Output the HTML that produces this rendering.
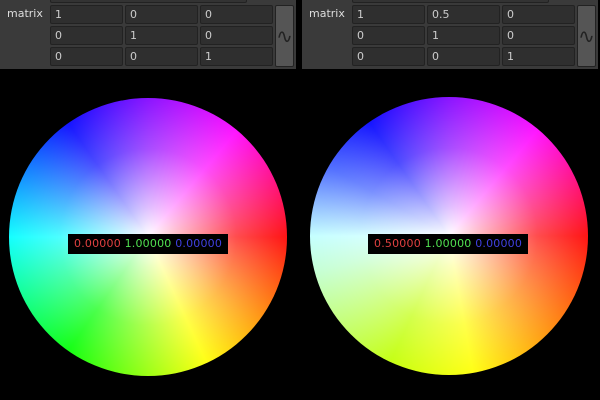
<!DOCTYPE html><html><head><style>
body{margin:0;width:600px;height:400px;background:#000;position:relative;overflow:hidden;font-family:"DejaVu Sans","Liberation Sans",sans-serif}
.panel{position:absolute;top:0;height:69px;width:296px;background:#3a3a3a}
.top{position:absolute;left:50px;top:-4px;width:195px;height:5px;background:#333;border:1px solid #222;border-radius:2px}
.lbl{position:absolute;left:7px;top:7px;color:#ddd;font-size:11px}
.f{position:absolute;width:71px;height:17px;background:#2f2f2f;border:1px solid #222;border-radius:2px;color:#ccc;font-size:11px;line-height:18px;text-indent:4px;box-sizing:content-box}
.btn{position:absolute;left:275px;top:5px;width:17px;height:60px;background:#555;border:1px solid #222;border-radius:2px;color:#222;font-size:20px;line-height:60px;text-align:center}
.w{position:absolute;width:278px;height:278px;border-radius:50%}
.w::after{content:"";position:absolute;inset:0;border-radius:50%;background:radial-gradient(circle,#fff 0%,rgba(255,255,255,.75) 15%,rgba(255,255,255,.3) 45%,rgba(255,255,255,0) 80%)}
.v{position:absolute;top:234px;height:20px;background:#000;font-size:11px;line-height:20px;padding:0 6px;z-index:2;white-space:pre;letter-spacing:0.2px}
.r{color:#e04040}.g{color:#50e050}.b{color:#4040e0}
</style></head><body>
<div class="panel" style="left:0"><div class="top"></div><div class="lbl">matrix</div>
<div class="f" style="left:50px;top:5px">1</div><div class="f" style="left:125px;top:5px">0</div><div class="f" style="left:200px;top:5px">0</div>
<div class="f" style="left:50px;top:26px">0</div><div class="f" style="left:125px;top:26px">1</div><div class="f" style="left:200px;top:26px">0</div>
<div class="f" style="left:50px;top:47px">0</div><div class="f" style="left:125px;top:47px">0</div><div class="f" style="left:200px;top:47px">1</div>
<div class="btn">∿</div></div>
<div class="panel" style="left:302px"><div class="top"></div><div class="lbl">matrix</div>
<div class="f" style="left:50px;top:5px">1</div><div class="f" style="left:125px;top:5px">0.5</div><div class="f" style="left:200px;top:5px">0</div>
<div class="f" style="left:50px;top:26px">0</div><div class="f" style="left:125px;top:26px">1</div><div class="f" style="left:200px;top:26px">0</div>
<div class="f" style="left:50px;top:47px">0</div><div class="f" style="left:125px;top:47px">0</div><div class="f" style="left:200px;top:47px">1</div>
<div class="btn">∿</div></div>
<div class="w" style="left:9px;top:98px;background:conic-gradient(#8000ff 0deg,#ff00ff 40deg,#ff0000 90deg,#ffa000 130deg,#ffff00 155deg,#00ff00 215deg,#00ffff 270deg,#0000ff 325deg,#8000ff 360deg)"></div>
<div class="w" style="left:310px;top:97px;background:conic-gradient(#8000ff 0deg,#ff00ff 40deg,#ff0000 90deg,#ff8000 130deg,#ffff00 170deg,#c0ff00 205deg,#c0ffd0 255deg,#c0ffff 270deg,#4060ff 300deg,#0000ff 325deg,#8000ff 360deg)"></div>
<div class="v" style="left:68px"><span class="r">0.00000</span> <span class="g">1.00000</span> <span class="b">0.00000</span></div>
<div class="v" style="left:368px"><span class="r">0.50000</span> <span class="g">1.00000</span> <span class="b">0.00000</span></div>
</body></html>
